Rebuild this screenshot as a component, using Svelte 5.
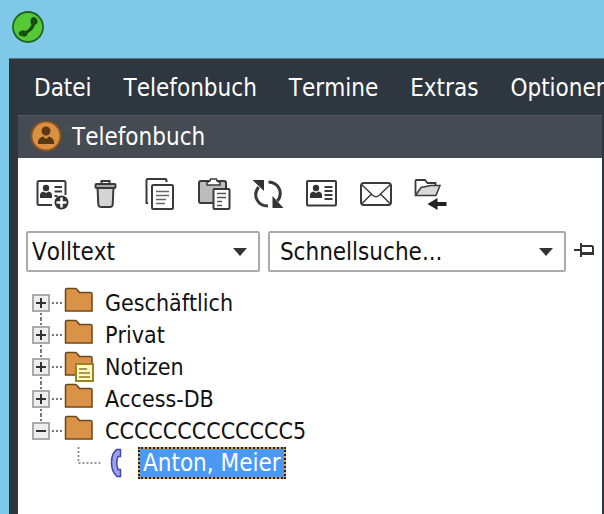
<script lang="ts">
	interface TreeNode {
		id: number;
		label: string;
		open: boolean;
		note?: boolean;
		contacts: string[];
	}

	const menuItems = ['Datei', 'Telefonbuch', 'Termine', 'Extras', 'Optionen'];

	const tools = [
		{ id: 'add', title: 'Neuer Kontakt' },
		{ id: 'delete', title: 'Löschen' },
		{ id: 'copy', title: 'Kopieren' },
		{ id: 'paste', title: 'Einfügen' },
		{ id: 'refresh', title: 'Aktualisieren' },
		{ id: 'card', title: 'Kontakt anzeigen' },
		{ id: 'mail', title: 'E-Mail' },
		{ id: 'move', title: 'Verschieben' }
	];

	let nodes: TreeNode[] = $state([
		{ id: 1, label: 'Geschäftlich', open: false, contacts: [] },
		{ id: 2, label: 'Privat', open: false, contacts: [] },
		{ id: 3, label: 'Notizen', open: false, note: true, contacts: [] },
		{ id: 4, label: 'Access-DB', open: false, contacts: [] },
		{ id: 5, label: 'CCCCCCCCCCCCC5', open: true, contacts: ['Anton, Meier'] }
	]);
	let selected = $state('Anton, Meier');
	let mode = $state('Volltext');
	let search = $state('Schnellsuche...');
</script>

{#snippet person()}
	<circle cx="12" cy="13" r="3.2" fill="#333" />
	<path d="M6 23v-3q0-3 3.500-3.500l2.500 1.500 2.500-1.500q3.500.5 3.500 3.500v3z" fill="#333" />
{/snippet}

<div class="window">
	<div class="titlebar">
		<svg width="34" height="34" viewBox="0 0 34 34" aria-hidden="true">
			<circle cx="17" cy="17" r="15" fill="#56c936" stroke="#23631f" stroke-width="1.800" />
			<path
				d="M20.500 8q2.500-2 4.500 0l1.500 2.500q.5 2-1 3.500l-1.500 1q-2 5.500-7 8l-1 2.500q-1.500 1.500-3.500 1L8.500 25.500q-1.500-2-.5-3.500l3-1.500q2-.5 3 .8 4.500-2 6.500-6.300l-1-2.500q-.5-2.500 1-4.500z"
				fill="#174c12"
			/>
		</svg>
	</div>

	<div class="frame">
		<nav class="menu">
			{#each menuItems as item (item)}
				<button>{item}</button>
			{/each}
		</nav>

		<section class="panel">
			<header>
				<svg width="32" height="32" viewBox="0 0 32 32" aria-hidden="true">
					<circle cx="16" cy="15" r="14.500" fill="#db9145" stroke="#8a541c" stroke-width="1.800" />
					<circle cx="16" cy="10" r="4.500" fill="#593814" />
					<path d="M8 23v-2q0-4 5-5.500l3 2.500 3-2.500q5 1.500 5 5.500v2z" fill="#593814" />
				</svg>
				<h1>Telefonbuch</h1>
			</header>

			<div class="toolbar">
				{#each tools as tool (tool.id)}
					<button title={tool.title} aria-label={tool.title}>
						<svg width="36" height="36" viewBox="0 0 36 36" fill="none" stroke="#3a3a3a" stroke-width="2">
							{#if tool.id === 'add'}
								<path d="M18 30H5q-1.500 0-1.500-1.500V7.500Q3.500 6 5 6h25q1.500 0 1.500 1.500V20" />
								<g stroke="none">{@render person()}</g>
								<path d="M20.500 12H28M20.500 16.500H28M20.500 21h3" />
								<circle cx="27.500" cy="27.500" r="7" fill="#333" stroke="none" />
								<path d="M27.500 22.500v10M22.500 27.500h10" stroke="#fff" stroke-width="2.500" />
							{:else if tool.id === 'delete'}
								<path d="M9.500 12h16l-.8 17.500q-.2 2.500-3 2.500h-8.400q-2.800 0-3-2.500z" fill="#d4d4d4" />
								<rect x="7.500" y="9" width="20" height="4" rx="1" fill="#aaa" />
								<path d="M13.500 8.500V6h8v2.500" />
							{:else if tool.id === 'copy'}
								<path d="M6 28H4.500V5Q4.500 4 6 4h17q1.500 0 1.500 1.500V7" />
								<rect x="10" y="10" width="21" height="24" rx="1.500" fill="#fff" />
								<path d="M14 16.500h13M14 20.500h13M14 24.500h10M14 28.500h9" stroke="#666" stroke-width="1.500" />
							{:else if tool.id === 'paste'}
								<rect x="3" y="6" width="27" height="22" rx="2" fill="#bcbcbc" />
								<path d="M11 10V7.500L14 6l.5-2h6l.5 2 3 1.500V10z" fill="#fff" stroke-width="1.500" />
								<rect x="17.500" y="14" width="16" height="20" rx="1" fill="#fff" />
								<path d="M21 18.500h9M21 22.500h9M21 26.500h5M21 30.500h5" stroke="#555" stroke-width="1.500" />
							{:else if tool.id === 'refresh'}
								<path d="M18.500 7C28 7.500 34 17 27.500 26M18 31C8 31 2 21 8.500 12" stroke-width="3" />
								<path d="M2.500 5H14v11zM22.500 21v12h11z" fill="#333" stroke="none" />
							{:else if tool.id === 'card'}
								<rect x="3" y="6" width="29" height="24.500" rx="1" />
								<g stroke="none">{@render person()}</g>
								<path d="M20.500 12h8M20.500 16h8M20.500 20h8M20.500 24h8" stroke-width="1.800" />
							{:else if tool.id === 'mail'}
								<rect x="3" y="8" width="30" height="22" rx="3" />
								<path d="M4 10l11 10.500q3 2.500 6 0L32 10M4 28.500l9.500-9.500M32 28.500l-9.500-9.500" stroke-width="1.500" />
							{:else}
								<path d="M3.500 19.500V6Q3.500 5 4.500 5h8.500l2.500 3h8v3" stroke-width="1.800" />
								<path d="M3.500 20.500L9 12.500l10-2h9l-4 10z" fill="#d8d8d8" stroke-width="1.500" />
								<path d="M15.500 29l10-6v4h9v4h-9v4z" fill="#222" stroke="none" />
							{/if}
						</svg>
					</button>
				{/each}
			</div>

			<div class="filters">
				<div class="combo mode">
					<select aria-label="Suchmodus" bind:value={mode}>
						<option>Volltext</option>
					</select>
					<svg width="14" height="8" viewBox="0 0 14 8" aria-hidden="true"><path d="M0 0h14L7 8z" fill="#333" /></svg>
				</div>
				<div class="combo search">
					<select aria-label="Schnellsuche" bind:value={search}>
						<option>Schnellsuche...</option>
					</select>
					<svg width="14" height="8" viewBox="0 0 14 8" aria-hidden="true"><path d="M0 0h14L7 8z" fill="#333" /></svg>
				</div>
				<button class="pin" aria-label="Anheften">
					<svg width="22" height="20" viewBox="0 0 22 20" fill="none" stroke="#333" stroke-width="2">
						<path d="M0 8h7M7 1v14" stroke-width="2" />
						<path d="M7 4h10.500q1.500 0 1.500 1.500V12H7" />
						<path d="M7 11.500h12" stroke-width="3" />
					</svg>
				</button>
			</div>

			<ul class="tree">
				{#each nodes as node, i (node.id)}
					<li>
						<div class="row">
							<div class="branch">
								<svg width="32" height="32" viewBox="0 0 32 32" stroke="#777" stroke-width="2" stroke-dasharray="2 2" aria-hidden="true">
									{#if i > 0}<path d="M9 0v6" />{/if}
									{#if i < nodes.length - 1}<path d="M9 26v6" />{/if}
									<path d="M20 16h11" />
								</svg>
								<button aria-label={node.open ? 'Zuklappen' : 'Aufklappen'} onclick={() => (node.open = !node.open)}>
									<svg width="14" height="14" viewBox="0 0 14 14" stroke="#333" stroke-width="2">
										<path d="M2 7h10" />
										{#if !node.open}<path d="M7 2v10" />{/if}
									</svg>
								</button>
							</div>
							<svg class="folder" width="32" height="32" viewBox="0 0 32 32" aria-hidden="true">
								<path
									d="M1.500 3q0-1.500 1.500-1.500h8.500q1 0 2 1.500l2 2.500h11q1.500 0 1.500 1.500v17H1.500z"
									fill="#d99248"
									stroke="#71441b"
									stroke-width="1.500"
								/>
								{#if node.note}
									<path d="M12 13h17v17H12z" fill="#fff9c4" stroke="#9a8420" stroke-width="2" />
									<path d="M15 18h8M15 22h11M15 26h11" stroke="#8c7a22" stroke-width="1.500" />
								{/if}
							</svg>
							<span>{node.label}</span>
						</div>
						{#if node.open}
							<ul>
								{#each node.contacts as contact (contact)}
									<li class="contact">
										<svg width="24" height="32" viewBox="0 0 24 32" fill="none" stroke="#777" stroke-width="1.500" stroke-dasharray="2 2" aria-hidden="true">
											<path d="M1.500 0v16H24" />
										</svg>
										<svg width="12" height="30" viewBox="0 0 12 30" aria-hidden="true">
											<path
												d="M10.500 1.500H7Q1.500 5 1.500 14.500T7 28.500h3.500v-7H8q-2.500-6.500 0-13h2.500z"
												fill="#9aa2ef"
												stroke="#4447a5"
												stroke-width="1.500"
											/>
										</svg>
										<button class:selected={selected === contact} onclick={() => (selected = contact)}>{contact}</button>
									</li>
								{/each}
							</ul>
						{/if}
					</li>
				{/each}
			</ul>
		</section>
	</div>
</div>

<style>
	:global(body) {
		background: #7ec9e7;
	}

	.window {
		display: flex;
		flex-direction: column;
		min-height: 100vh;
		box-sizing: border-box;
		padding-left: 9px;
		font-family: 'DejaVu Sans Condensed', 'Noto Sans', sans-serif;
		font-size: 24px;
		font-kerning: none;
		line-height: 32px;
		color: #111;
	}

	button {
		padding: 0;
		border: none;
		background: none;
		color: inherit;
		font: inherit;
		font-kerning: none;
		cursor: pointer;
	}

	svg {
		display: block;
		flex: none;
	}

	.titlebar {
		height: 48px;
		padding: 10px 2px 0;
	}

	.frame {
		display: flex;
		flex-direction: column;
		flex: 1;
		padding: 0 2px 0 9px;
		background: #2e363f;
		border-top: 1px solid #56727f;
	}

	.menu {
		display: flex;
		gap: 32px;
		margin-right: -2px;
		padding: 13px 0 11px 16px;
		overflow: hidden;
		color: #fff;
	}

	.menu button {
		flex: none;
		white-space: nowrap;
	}

	.panel {
		display: flex;
		flex-direction: column;
		flex: 1;
		background: #fff;
	}

	header {
		display: flex;
		align-items: center;
		gap: 10px;
		height: 42px;
		padding-left: 12px;
		border-top: 1px solid #505962;
		background: #444b53;
		color: #fff;
	}

	h1 {
		margin: 0;
		font-size: 24px;
		font-weight: normal;
	}

	.toolbar {
		display: flex;
		gap: 18px;
		padding: 17px 16px 20px;
	}

	.filters {
		display: flex;
		align-items: center;
		gap: 8px;
		padding: 0 6px 0 8px;
	}

	.combo {
		display: grid;
		align-items: center;
		min-width: 0;
	}

	.combo > * {
		grid-area: 1 / 1;
	}

	.combo svg {
		justify-self: end;
		margin-right: 13px;
		pointer-events: none;
	}

	.mode {
		flex: 233 1 0;
	}

	.search {
		flex: 297 1 0;
	}

	select {
		width: 100%;
		height: 41px;
		padding: 0 32px 0 4px;
		border: 2px solid #aaa;
		border-radius: 2px;
		appearance: none;
		background: #fff;
		color: inherit;
		font: inherit;
		font-kerning: none;
	}

	.search select {
		padding-left: 10px;
	}

	ul {
		margin: 0;
		padding: 0;
		list-style: none;
	}

	.tree {
		padding: 15px 14px;
	}

	.row {
		display: flex;
		align-items: center;
		font-size: 23px;
	}

	.branch {
		display: grid;
		align-items: center;
	}

	.branch > * {
		grid-area: 1 / 1;
	}

	.branch button {
		width: 18px;
		height: 18px;
		border: 2px solid #aaa;
		background: #eee;
	}

	.folder {
		margin-right: 9px;
	}

	.contact {
		display: flex;
		align-items: center;
		padding-left: 45px;
	}

	.contact button {
		margin-left: 16px;
		padding: 0 3px;
		border: 2px dotted transparent;
		line-height: 28px;
	}

	.contact svg + svg {
		margin-left: 9px;
	}

	.contact .selected {
		border-color: #222;
		background:
			linear-gradient(#4b98f5, #4b98f5) padding-box,
			#e9a050 border-box;
		color: #fff;
	}
</style>
